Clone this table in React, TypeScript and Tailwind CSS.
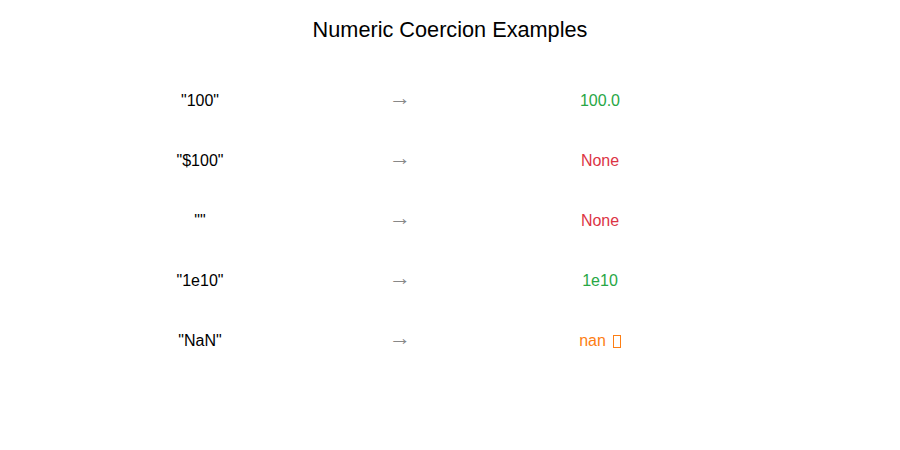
const rows = [
  { input: '"100"', output: '100.0', color: 'text-[#28a745]', tofu: false },
  { input: '"$100"', output: 'None', color: 'text-[#dc3545]', tofu: false },
  { input: '""', output: 'None', color: 'text-[#dc3545]', tofu: false },
  { input: '"1e10"', output: '1e10', color: 'text-[#28a745]', tofu: false },
  { input: '"NaN"', output: 'nan', color: 'text-[#fd7e14]', tofu: true },
]

export default function App() {
  return (
    <div className="w-[900px] h-[450px] bg-white font-['Liberation_Sans',Arial,sans-serif]">
      <h1 className="pt-[17px] text-center text-[21.7px] leading-[26px] text-black">Numeric Coercion Examples</h1>
      <div className="mt-[28px] ml-[100px] grid w-[600px] grid-cols-3">
        {rows.map((r) => (
          <div key={r.input} className="contents">
            <div className="flex h-[60px] items-center justify-center text-base text-black">{r.input}</div>
            <div className="flex h-[60px] items-center justify-center text-[22px] text-[#888]">
              <span className="-translate-y-[4px]">→</span>
            </div>
            <div className={`flex h-[60px] items-center justify-center gap-[7px] text-base ${r.color}`}>
              {r.output}
              {r.tofu && <span className="inline-block h-[13px] w-[8px] border border-current" />}
            </div>
          </div>
        ))}
      </div>
    </div>
  )
}
